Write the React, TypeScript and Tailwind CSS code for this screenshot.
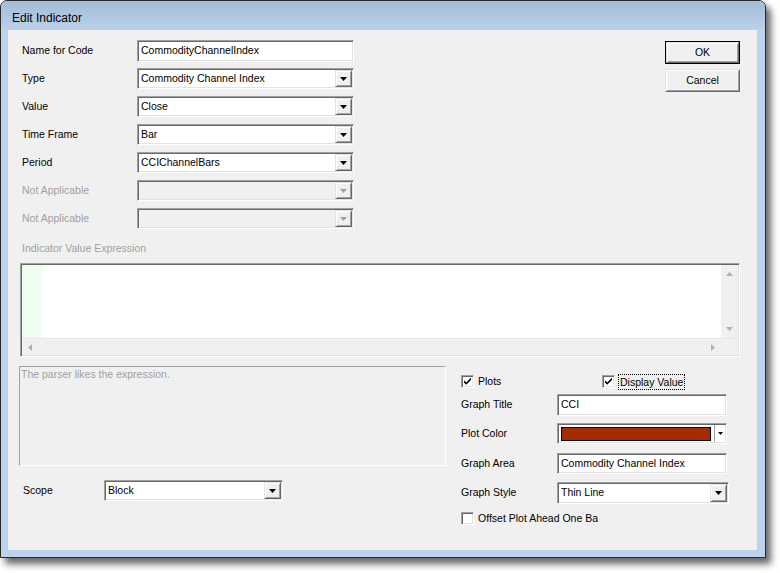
import React from "react";

const sunken =
  "border border-t-[#a0a0a0] border-l-[#a0a0a0] border-b-white border-r-white shadow-[inset_1px_1px_0_#696969,inset_-1px_-1px_0_#e3e3e3]";
const raised =
  "border border-t-[#e3e3e3] border-l-[#e3e3e3] border-b-[#696969] border-r-[#696969] shadow-[inset_1px_1px_0_#ffffff,inset_-1px_-1px_0_#a0a0a0]";

function Arrow({ color = "#000", dir = "down" }: { color?: string; dir?: string }) {
  if (dir === "up")
    return (
      <svg width="7" height="4" viewBox="0 0 7 4">
        <path d="M0 4h7L3.5 0z" fill={color} />
      </svg>
    );
  if (dir === "left")
    return (
      <svg width="4" height="7" viewBox="0 0 4 7">
        <path d="M4 0v7L0 3.5z" fill={color} />
      </svg>
    );
  if (dir === "right")
    return (
      <svg width="4" height="7" viewBox="0 0 4 7">
        <path d="M0 0v7L4 3.5z" fill={color} />
      </svg>
    );
  return (
    <svg width="7" height="4" viewBox="0 0 7 4">
      <path d="M0 0h7L3.5 4z" fill={color} />
    </svg>
  );
}

function Edit({ text, w = "w-[217px]", h = "h-[22px]" }: { text: string; w?: string; h?: string }) {
  return (
    <div className={`${w} ${h} bg-white ${sunken} flex items-center pl-[3px] text-[10.5px] text-black whitespace-nowrap overflow-hidden`}>
      {text}
    </div>
  );
}

function Combo({
  text,
  w = "w-[217px]",
  h = "h-[21px]",
  disabled = false,
}: {
  text: string;
  w?: string;
  h?: string;
  disabled?: boolean;
}) {
  return (
    <div className={`${w} ${h} ${disabled ? "bg-[#f0f0f0]" : "bg-white"} ${sunken} p-[1px] flex`}>
      <div className="flex-1 flex items-center pl-[2px] text-[10.5px] text-black whitespace-nowrap overflow-hidden">
        {text}
      </div>
      <div className={`w-[17px] h-full bg-[#f0f0f0] ${raised} flex items-center justify-center`}>
        <Arrow color={disabled ? "#a0a0a0" : "#000"} />
      </div>
    </div>
  );
}

function Check({ checked }: { checked: boolean }) {
  return (
    <div className={`w-[13px] h-[13px] shrink-0 bg-white ${sunken} flex items-center justify-center`}>
      {checked && (
        <svg width="7" height="7" viewBox="0 0 7 7">
          <path d="M0 2.2v2.4l2.2 2.2L7 2V-0.4L2.2 4.4z" fill="#000" />
        </svg>
      )}
    </div>
  );
}

function Row({ label, children, disabled = false }: { label: string; children: React.ReactNode; disabled?: boolean }) {
  return (
    <div className="flex h-[28px] items-start">
      <div className={`w-[115px] h-[21px] flex items-center text-[10.5px] ${disabled ? "text-[#a0a0a0]" : "text-black"}`}>
        {label}
      </div>
      {children}
    </div>
  );
}

function Button({ text, def = false }: { text: string; def?: boolean }) {
  return (
    <div className={`w-[75px] h-[23px] ${def ? "border border-black" : ""} flex`}>
      <div className={`flex-1 bg-[#f0f0f0] ${raised} flex items-center justify-center text-[10.5px] text-black`}>
        {text}
      </div>
    </div>
  );
}

export default function App() {
  return (
    <div className="w-[780px] h-[573px] bg-white font-['Liberation_Sans',Arial,sans-serif] overflow-hidden">
      <div className="w-[766px] h-[558px] flex flex-col rounded-t-[7px] border border-[#2a2a2a] bg-[#bcd3ec] shadow-[5px_6px_7px_rgba(0,0,0,0.6)] overflow-hidden">
        {/* Title bar */}
        <div className="h-[29px] shrink-0 bg-linear-to-b from-[#a3bcd8] to-[#bad1ea] flex items-center pl-[11px] pt-[5px] text-[12px] text-black">
          Edit Indicator
        </div>
        {/* Client */}
        <div className="ml-[7px] w-[749px] h-[520px] bg-[#f0f0f0] flex flex-col pt-[10px]">
          {/* top form */}
          <div className="flex">
            <div className="flex flex-col pl-[14px]">
              <Row label="Name for Code">
                <Edit text="CommodityChannelIndex" />
              </Row>
              <Row label="Type">
                <Combo text="Commodity Channel Index" />
              </Row>
              <Row label="Value">
                <Combo text="Close" />
              </Row>
              <Row label="Time Frame">
                <Combo text="Bar" />
              </Row>
              <Row label="Period">
                <Combo text="CCIChannelBars" />
              </Row>
              <Row label="Not Applicable" disabled>
                <Combo text="" disabled />
              </Row>
              <Row label="Not Applicable" disabled>
                <Combo text="" disabled />
              </Row>
            </div>
            <div className="ml-auto mr-[17px] flex flex-col gap-[5px] pt-[1px]">
              <Button text="OK" def />
              <Button text="Cancel" />
            </div>
          </div>

          <div className="ml-[14px] mt-[6px] h-[13px] text-[10.5px] text-[#a0a0a0] flex items-center">
            Indicator Value Expression
          </div>

          {/* editor */}
          <div className={`ml-[12px] mt-[8px] w-[720px] h-[94px] bg-white ${sunken} p-[1px] flex flex-col`}>
            <div className="flex flex-1">
              <div className="w-[20px] bg-[#eefdee]" />
              <div className="flex-1 bg-white" />
              <div className="w-[17px] bg-[#f0f0f0] flex flex-col items-center justify-between py-[7px]">
                <Arrow dir="up" color="#b0b0b0" />
                <Arrow dir="down" color="#b0b0b0" />
              </div>
            </div>
            <div className="h-[17px] flex bg-[#f0f0f0] border-t border-[#e6e6e6]">
              <div className="flex-1 flex items-center justify-between px-[6px]">
                <Arrow dir="left" color="#b0b0b0" />
                <Arrow dir="right" color="#b0b0b0" />
              </div>
              <div className="w-[17px] bg-[#f0f0f0]" />
            </div>
          </div>

          {/* bottom */}
          <div className="flex mt-[9px]">
            <div className="ml-[11px] w-[427px] flex flex-col">
              <div className="h-[100px] border border-t-[#a0a0a0] border-l-[#a0a0a0] border-b-white border-r-white text-[10.5px] text-[#a0a0a0] pl-[1px] pt-[1px] leading-[13px]">
                The parser likes the expression.
              </div>
              <div className="flex mt-[14px] ml-[4px] items-center">
                <div className="w-[81px] text-[10.5px] text-black h-[21px] flex items-center">Scope</div>
                <Combo text="Block" w="w-[179px]" />
              </div>
            </div>

            <div className="ml-[15px] flex flex-col">
              <div className="mt-[9px] h-[13px] flex items-center">
                <div className="w-[141px] flex items-center">
                  <Check checked />
                  <span className="ml-[4px] text-[10.5px] text-black">Plots</span>
                </div>
                <Check checked />
                <span className="ml-[3px] text-[10.5px] text-black border border-dotted border-black px-[1px] leading-[14px]">
                  Display Value
                </span>
              </div>
              <div className="mt-[6px] flex items-center">
                <div className="w-[96px] text-[10.5px] text-black">Graph Title</div>
                <Edit text="CCI" w="w-[170px]" />
              </div>
              <div className="mt-[7px] flex items-center">
                <div className="w-[96px] text-[10.5px] text-black">Plot Color</div>
                <div className={`w-[170px] h-[21px] bg-white ${sunken} flex items-center pl-[3px] pr-[3px]`}>
                  <div className="flex-1 h-[14px] bg-[#a52a00] border border-black" />
                  <div className="ml-[3px] w-[2px] h-[17px] border-l border-[#a0a0a0] border-r border-r-white" />
                  <div className="ml-[2px] flex items-center">
                    <svg width="5" height="3" viewBox="0 0 5 3">
                      <path d="M0 0h5L2.5 3z" fill="#000" />
                    </svg>
                  </div>
                </div>
              </div>
              <div className="mt-[9px] flex items-center">
                <div className="w-[96px] text-[10.5px] text-black">Graph Area</div>
                <Edit text="Commodity Channel Index" w="w-[170px]" h="h-[21px]" />
              </div>
              <div className="mt-[8px] flex items-center">
                <div className="w-[96px] text-[10.5px] text-black">Graph Style</div>
                <Combo text="Thin Line" w="w-[172px]" h="h-[22px]" />
              </div>
              <div className="mt-[8px] w-[137px] h-[13px] flex items-center overflow-hidden whitespace-nowrap">
                <Check checked={false} />
                <span className="ml-[4px] text-[10.5px] text-black">Offset Plot Ahead One Bar</span>
              </div>
            </div>
          </div>
        </div>
      </div>
    </div>
  );
}
